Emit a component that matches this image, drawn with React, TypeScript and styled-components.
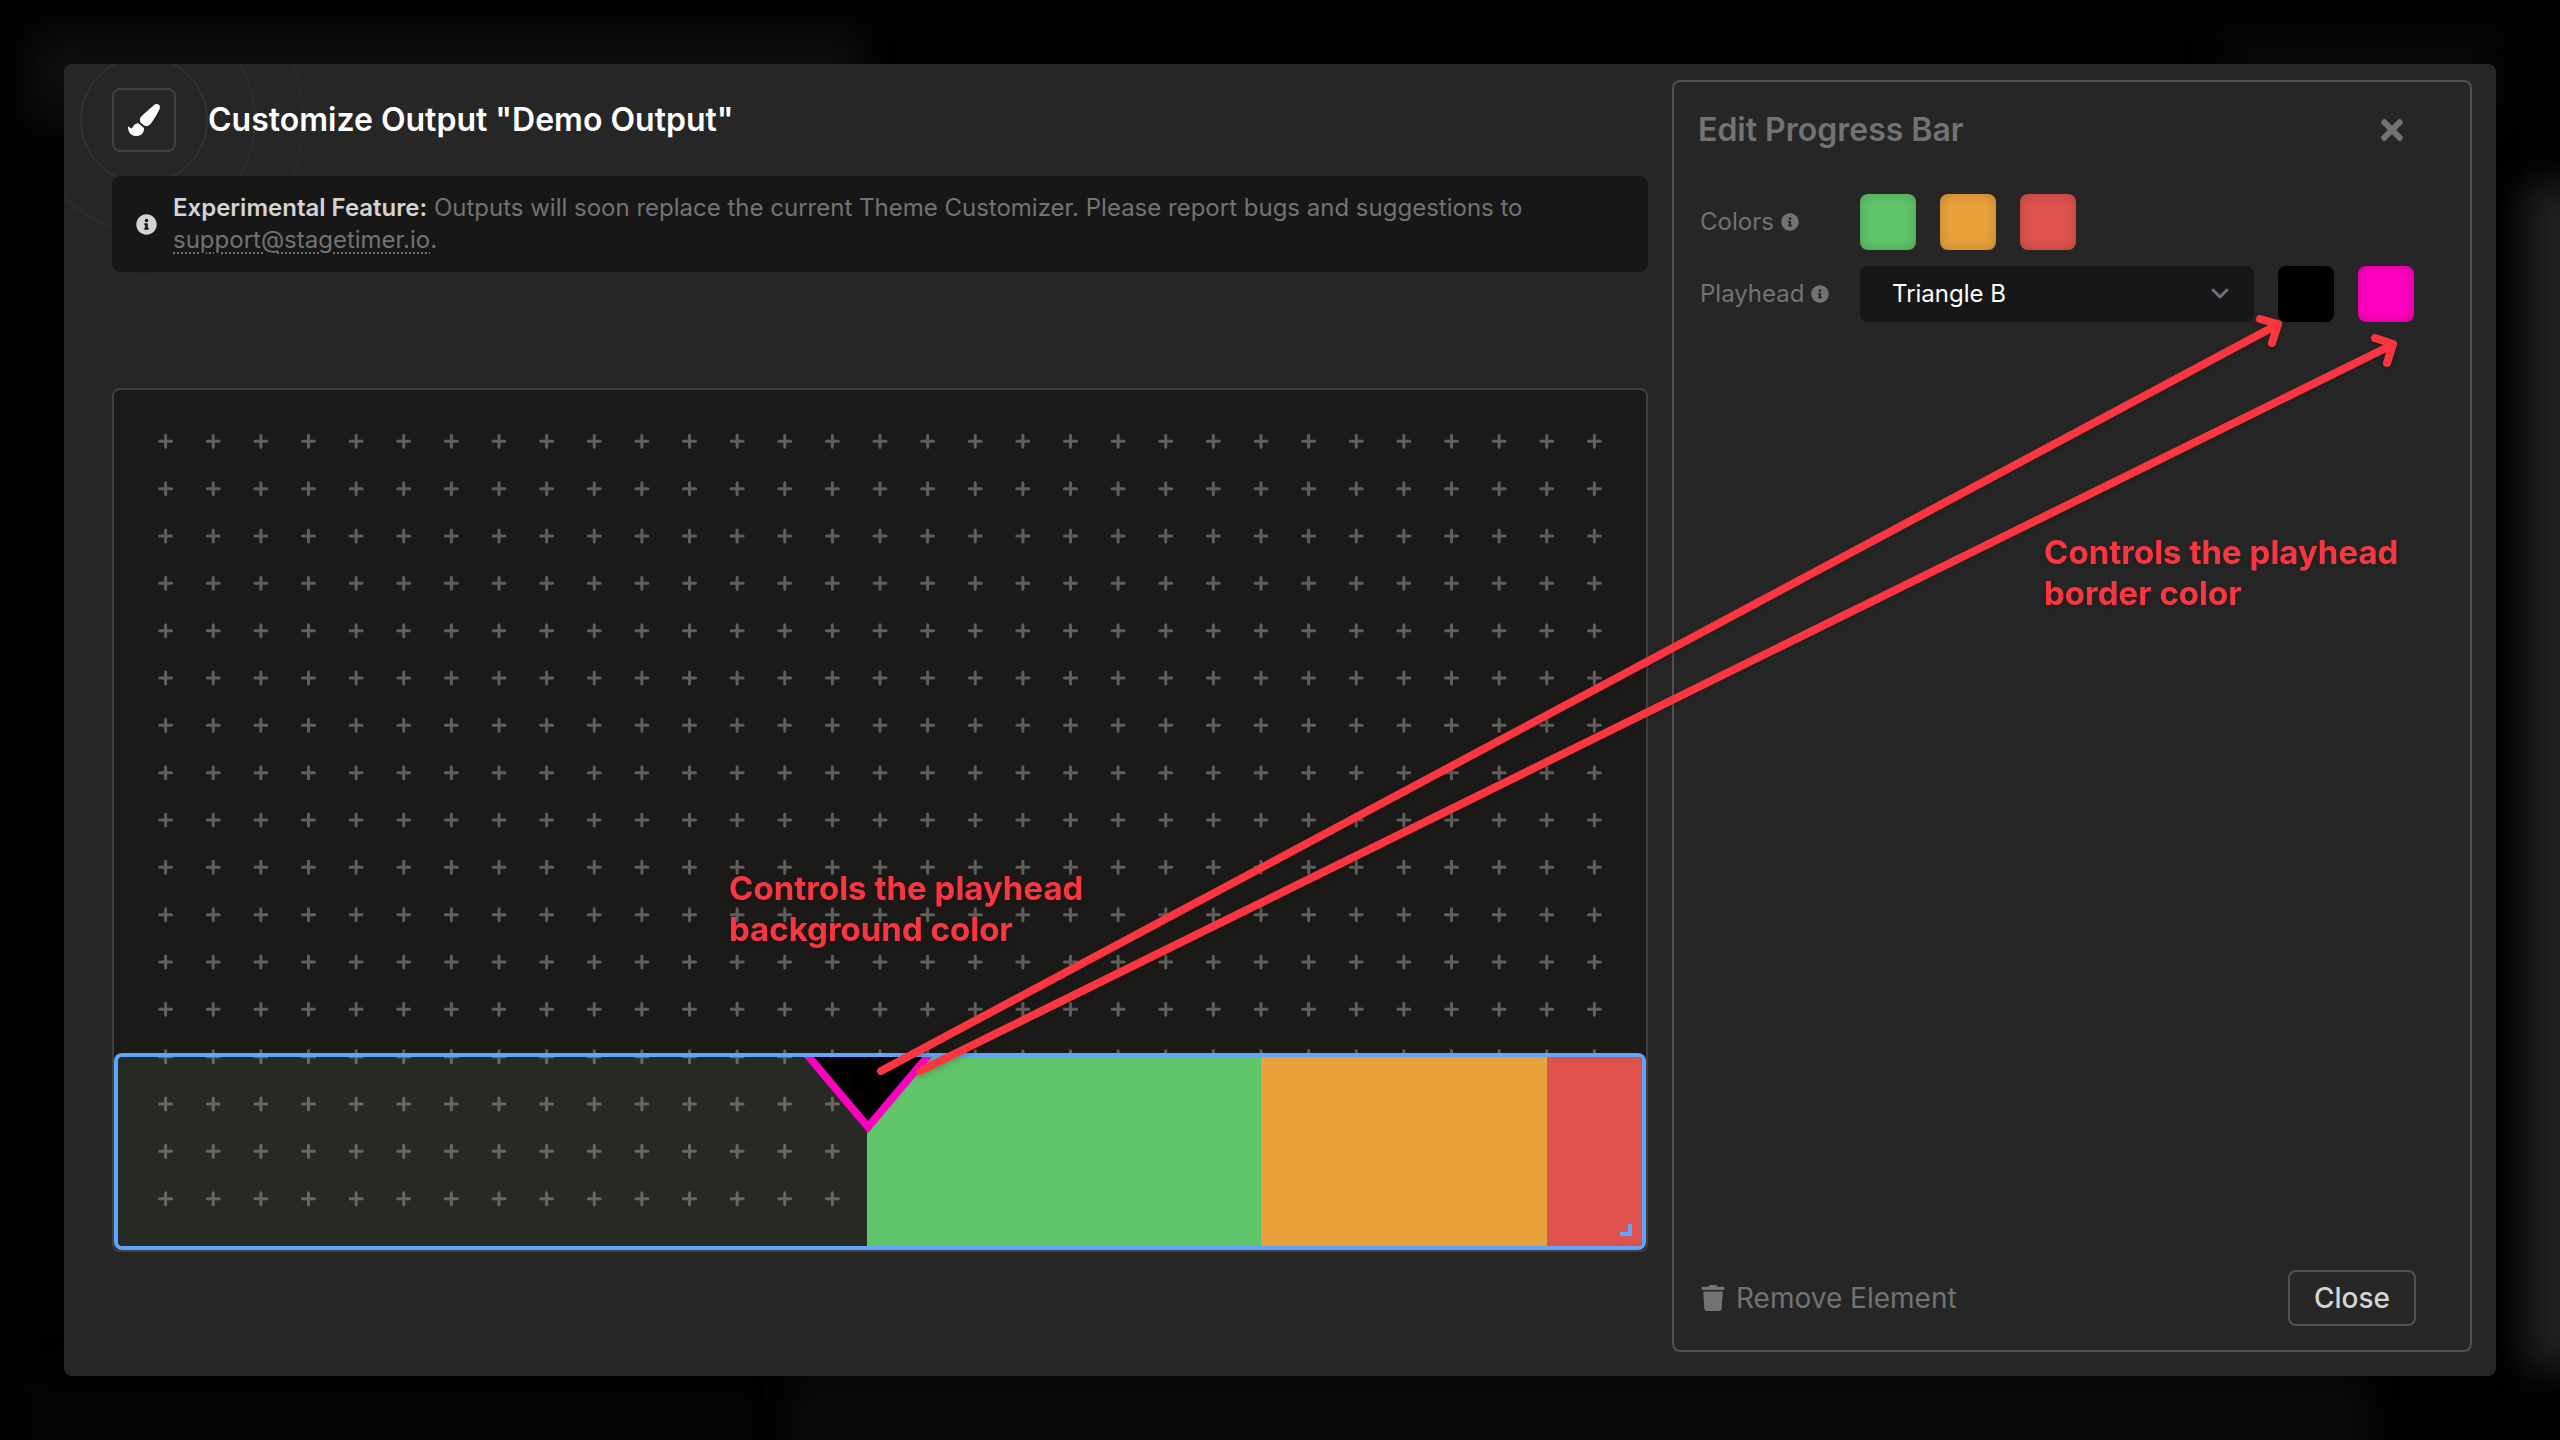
import React, { useId, useState } from 'react'
import styled, { createGlobalStyle } from 'styled-components'
import { FaPaintBrush, FaInfoCircle, FaTimes, FaTrash } from 'react-icons/fa'

const GlobalStyle = createGlobalStyle`
  *, *::before, *::after { box-sizing: border-box; }
  body {
    margin: 0;
    background: #030303;
    color: #fff;
    font-family: Inter, 'Liberation Sans', sans-serif;
  }
  button, select, input { font: inherit; }
`

const Backdrop = styled.div`
  position: relative;
  min-height: 100vh;
  padding: 64px;
  display: flex;
  overflow: hidden;
`

const Glow = styled.div<{ $area: string; $tone: string }>`
  position: absolute;
  inset: ${(p) => p.$area};
  background: ${(p) => p.$tone};
  filter: blur(16px);
`

const Dialog = styled.main`
  position: relative;
  flex: 1;
  display: flex;
  gap: 24px;
  padding: 16px 24px 24px 48px;
  border-radius: 8px;
  background: #262626;
  overflow: hidden;
  box-shadow: 0 0 24px rgba(0, 0, 0, 0.4);
`

const Rings = styled.svg`
  position: absolute;
  top: -104px;
  left: -80px;
  width: 320px;
  height: 320px;
  fill: none;
  stroke: #fff;
  stroke-width: 2;
`

const Editor = styled.section`
  position: relative;
  flex: 1;
  min-width: 0;
  display: flex;
  flex-direction: column;
`

const Header = styled.header`
  display: flex;
  align-items: center;
  gap: 32px;
  padding: 8px 0 24px;
`

const IconBox = styled.span`
  display: grid;
  place-items: center;
  width: 64px;
  height: 64px;
  border: 2px solid #404040;
  border-radius: 8px;
  background: #262626;
  font-size: 32px;
`

const Title = styled.h1`
  margin: 0;
  font-size: 32px;
  line-height: 40px;
  font-weight: 600;
`

const Notice = styled.div`
  display: flex;
  align-items: center;
  gap: 16px;
  padding: 16px 24px;
  border-radius: 8px;
  background: #171717;
  color: #737373;
  font-size: 24px;
  line-height: 32px;

  > svg { flex: none; width: 21px; height: 21px; color: #d4d4d4; }
  p { margin: 0; }
  strong { color: #d4d4d4; font-weight: 600; }
  a {
    color: inherit;
    text-decoration: underline dotted;
    text-underline-offset: 4px;
    text-decoration-thickness: 2px;
  }
`

const Stage = styled.div`
  flex: 1;
  display: flex;
  flex-direction: column;
  justify-content: center;
  padding-top: 16px;
`

const Canvas = styled.div`
  position: relative;
  aspect-ratio: 16 / 9;
  padding: 4px;
  border: 2px solid #404040;
  border-radius: 8px;
  background: #1b1a18;
  display: grid;
  grid-template-rows: 14fr 4fr;
`

const Guides = styled.svg`
  position: absolute;
  inset: 4px;
  fill: none;
  stroke: #5f5f5d;
  stroke-width: 3;
  stroke-linecap: round;
`

const ProgressBar = styled.div`
  position: relative;
  grid-row: 2;
  display: flex;
  border-radius: 4px;
  box-shadow: 0 0 0 4px #60a5fa;
`

const Segment = styled.div<{ $share: number; $color: string }>`
  flex: ${(p) => p.$share} 0 0;
  background: ${(p) => p.$color};
  &:last-of-type { border-radius: 0 4px 4px 0; }
`

const Playhead = styled.svg`
  position: absolute;
  top: 0;
  left: 49.2%;
  width: 128px;
  height: 76px;
  margin-left: -64px;
`

const ResizeHandle = styled.span`
  position: absolute;
  right: 10px;
  bottom: 10px;
  width: 12px;
  height: 12px;
  border: solid #60a5fa;
  border-width: 0 4px 4px 0;
  border-radius: 1px;
`

const Panel = styled.aside`
  position: relative;
  flex: none;
  width: 800px;
  display: flex;
  flex-direction: column;
  padding: 24px 54px 24px 24px;
  border: 2px solid #525252;
  border-radius: 8px;
`

const PanelHeader = styled.div`
  display: flex;
  align-items: center;
  justify-content: space-between;
  margin-bottom: 42px;
  padding-top: 2px;
  color: #737373;
`

const PanelTitle = styled.h2`
  margin: 0;
  font-size: 32px;
  line-height: 44px;
  font-weight: 600;
`

const DismissButton = styled.button`
  display: grid;
  place-items: center;
  width: 48px;
  height: 44px;
  padding: 0;
  border: 0;
  background: none;
  color: inherit;
  font-size: 32px;
`

const Fields = styled.div`
  flex: 1;
  display: flex;
  flex-direction: column;
  gap: 16px;
  padding: 0 2px;
`

const Field = styled.div`
  display: grid;
  grid-template-columns: 136px 1fr;
  gap: 24px;
  align-items: center;
  color: #737373;
  font-size: 24px;
  line-height: 32px;
`

const FieldLabel = styled.label`
  display: flex;
  align-items: center;
  gap: 7px;
  svg { width: 18px; height: 18px; }
`

const Controls = styled.div`
  display: flex;
  gap: 24px;
`

const Swatch = styled.input`
  flex: none;
  appearance: none;
  width: 56px;
  height: 56px;
  padding: 0;
  border: 0;
  border-radius: 8px;
  background: ${(p) => String(p.value)};
  box-shadow: inset 0 0 12px rgba(0, 0, 0, 0.2);
  &::-webkit-color-swatch-wrapper { padding: 0; }
  &::-webkit-color-swatch { border: 0; opacity: 0; }
`

const SelectBox = styled.div`
  flex: 1;
  display: grid;
  align-items: center;
  svg {
    grid-area: 1 / 1;
    justify-self: end;
    margin-right: 22px;
    fill: none;
    stroke: #6b7280;
    stroke-width: 3;
    stroke-linecap: round;
    stroke-linejoin: round;
    pointer-events: none;
  }
`

const Select = styled.select`
  grid-area: 1 / 1;
  appearance: none;
  width: 100%;
  height: 56px;
  padding: 0 64px 0 32px;
  border: 0;
  border-radius: 8px;
  background: #171717;
  color: #fff;
`

const PanelFooter = styled.div`
  display: flex;
  align-items: center;
  justify-content: space-between;
`

const FooterButton = styled.button<{ $outlined?: boolean }>`
  display: flex;
  align-items: center;
  gap: 11px;
  height: 56px;
  padding: 0 ${(p) => (p.$outlined ? 24 : 3)}px;
  border: ${(p) => (p.$outlined ? '2px solid #525252' : '0')};
  border-radius: 8px;
  background: none;
  color: ${(p) => (p.$outlined ? '#d4d4d4' : '#737373')};
  font-size: 28px;
  line-height: 36px;
  font-weight: ${(p) => (p.$outlined ? 500 : 400)};
  svg { width: 24px; height: 26px; }
`

const Annotations = styled.div`
  position: absolute;
  inset: 0;
  pointer-events: none;
  color: #fb3640;
  filter: drop-shadow(0 2px 3px rgba(0, 0, 0, 0.2));
`

const Arrows = styled.svg`
  position: absolute;
  inset: 0;
  width: 100%;
  height: 100%;
  fill: none;
  stroke: currentColor;
  stroke-width: 8;
  stroke-linecap: round;
  stroke-linejoin: round;
`

const Note = styled.p<{ $x: number; $y: number }>`
  position: absolute;
  left: ${(p) => p.$x}px;
  top: ${(p) => p.$y}px;
  margin: 0;
  font-size: 33px;
  line-height: 41px;
  font-weight: 700;
`

const COLS = 32
const ROWS = 18
const WIDTH = 1524
const HEIGHT = 852

const guidePath = Array.from({ length: (COLS - 1) * (ROWS - 1) }, (_, i) => {
  const x = ((i % (COLS - 1)) + 1) * (WIDTH / COLS)
  const y = (Math.floor(i / (COLS - 1)) + 1) * (HEIGHT / ROWS)
  return `M${x - 6} ${y}h12M${x} ${y - 6}v12`
}).join('')

const SEGMENTS = [
  { share: 4915, color: 'rgba(170, 205, 165, 0.09)' },
  { share: 2585, color: '#5fc46a' },
  { share: 1875, color: '#e8a13b' },
  { share: 625, color: '#dd524c' },
]

const STAGE_COLORS = [
  { name: 'Normal color', value: '#5fc46a' },
  { name: 'Warning color', value: '#e8a13b' },
  { name: 'Danger color', value: '#dd524c' },
]

function ColorSwatch({ name, initial, id }: { name: string; initial: string; id?: string }) {
  const [value, setValue] = useState(initial)
  return (
    <Swatch type="color" id={id} aria-label={name} value={value} onChange={(e) => setValue(e.target.value)} />
  )
}

export default function App() {
  const id = useId()
  return (
    <>
      <GlobalStyle />
      <Backdrop>
        <Glow $area="36px calc(100% - 860px) calc(100% - 120px) 36px" $tone="#101010" />
        <Glow $area="36px 60px calc(100% - 120px) calc(100% - 340px)" $tone="#090808" />
        <Glow $area="184px -60px 72px calc(100% - 36px)" $tone="#1f1f1f" />
        <Glow $area="calc(100% - 70px) calc(100% - 760px) -40px 36px" $tone="#050505" />
        <Glow $area="calc(100% - 70px) 196px -40px 790px" $tone="#0a0a0a" />
        <Dialog>
          <Rings viewBox="0 0 320 320" aria-hidden="true">
            <circle cx="160" cy="160" r="63" opacity="0.05" />
            <circle cx="160" cy="160" r="111" opacity="0.03" />
            <circle cx="160" cy="160" r="159" opacity="0.02" />
          </Rings>
          <Editor>
            <Header>
              <IconBox><FaPaintBrush /></IconBox>
              <Title>Customize Output "Demo Output"</Title>
            </Header>
            <Notice>
              <FaInfoCircle />
              <p>
                <strong>Experimental Feature:</strong> Outputs will soon replace the current Theme Customizer. Please
                report bugs and suggestions to <a href="mailto:support@stagetimer.io">support@stagetimer.io</a>.
              </p>
            </Notice>
            <Stage>
              <Canvas>
                <Guides viewBox={`0 0 ${WIDTH} ${HEIGHT}`} aria-hidden="true">
                  <path d={guidePath} />
                </Guides>
                <ProgressBar>
                  {SEGMENTS.map((s) => (
                    <Segment key={s.color} $share={s.share} $color={s.color} />
                  ))}
                  <Playhead viewBox="0 0 128 76" aria-hidden="true">
                    <path d="M0 0H128L64 76Z" fill="#ff00bf" />
                    <path d="M10 0H118L64 64Z" fill="#000" />
                  </Playhead>
                  <ResizeHandle />
                </ProgressBar>
              </Canvas>
            </Stage>
          </Editor>
          <Panel>
            <PanelHeader>
              <PanelTitle>Edit Progress Bar</PanelTitle>
              <DismissButton type="button" aria-label="Dismiss"><FaTimes /></DismissButton>
            </PanelHeader>
            <Fields>
              <Field>
                <FieldLabel htmlFor={`${id}-colors`}>Colors <FaInfoCircle /></FieldLabel>
                <Controls>
                  {STAGE_COLORS.map((c, i) => (
                    <ColorSwatch key={c.name} name={c.name} initial={c.value} id={i === 0 ? `${id}-colors` : undefined} />
                  ))}
                </Controls>
              </Field>
              <Field>
                <FieldLabel htmlFor={`${id}-playhead`}>Playhead <FaInfoCircle /></FieldLabel>
                <Controls>
                  <SelectBox>
                    <Select id={`${id}-playhead`} defaultValue="Triangle B">
                      <option>Triangle B</option>
                    </Select>
                    <svg width="24" height="24" viewBox="0 0 24 24" aria-hidden="true">
                      <path d="M5 8l7 7 7-7" />
                    </svg>
                  </SelectBox>
                  <ColorSwatch name="Playhead background color" initial="#000000" />
                  <ColorSwatch name="Playhead border color" initial="#ff00bf" />
                </Controls>
              </Field>
            </Fields>
            <PanelFooter>
              <FooterButton type="button"><FaTrash />Remove Element</FooterButton>
              <FooterButton type="button" $outlined>Close</FooterButton>
            </PanelFooter>
          </Panel>
        </Dialog>
        <Annotations>
          <Arrows viewBox="0 0 2560 1440" aria-hidden="true">
            <path d="M881 1071L2277 325M2260 319L2278 324L2272 343" />
            <path d="M920 1071L2392 345M2375 338L2393 344L2387 363" />
          </Arrows>
          <Note $x={729} $y={868}>Controls the playhead<br />background color</Note>
          <Note $x={2044} $y={532}>Controls the playhead<br />border color</Note>
        </Annotations>
      </Backdrop>
    </>
  )
}
